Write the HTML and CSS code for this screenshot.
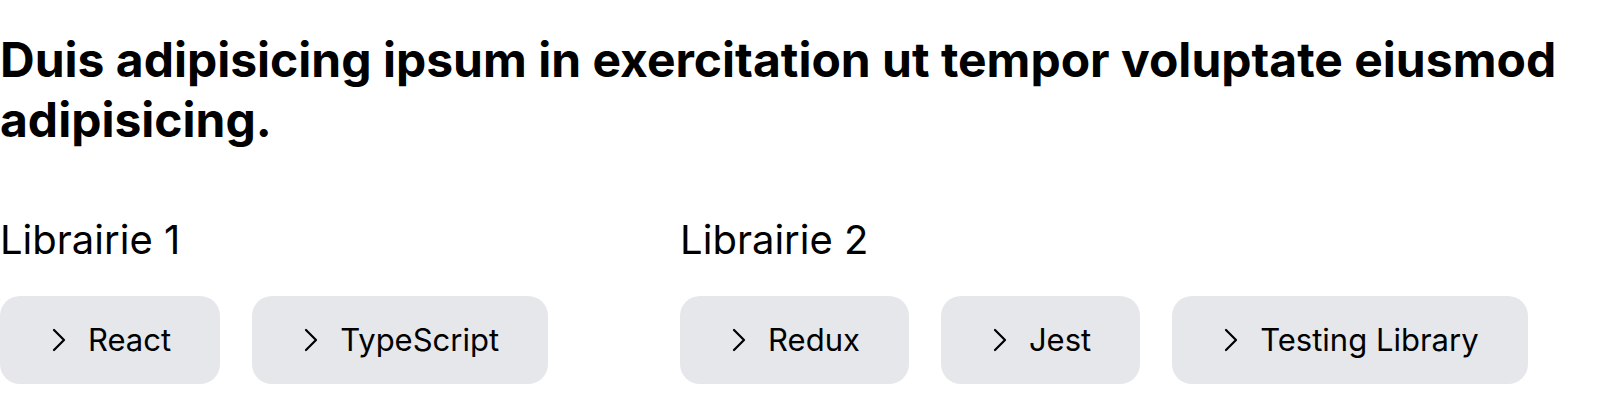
FILE: index.html
```html
<!DOCTYPE html>
<html lang="fr">
<head>
<meta charset="utf-8">
<link rel="stylesheet" href="styles.css">
</head>
<body>
<main class="page">
  <h1 class="title">Duis adipisicing ipsum in exercitation ut tempor voluptate eiusmod adipisicing.</h1>
  <div class="libs">
    <section class="lib">
      <h2 class="lib-name">Librairie 1</h2>
      <div class="tags">
        <span class="tag"><svg class="chev" viewBox="0 0 24 24"><path d="M6 2 L16 12 L6 22"/></svg>React</span>
        <span class="tag"><svg class="chev" viewBox="0 0 24 24"><path d="M6 2 L16 12 L6 22"/></svg>TypeScript</span>
      </div>
    </section>
    <section class="lib">
      <h2 class="lib-name">Librairie 2</h2>
      <div class="tags">
        <span class="tag"><svg class="chev" viewBox="0 0 24 24"><path d="M6 2 L16 12 L6 22"/></svg>Redux</span>
        <span class="tag"><svg class="chev" viewBox="0 0 24 24"><path d="M6 2 L16 12 L6 22"/></svg>Jest</span>
        <span class="tag"><svg class="chev" viewBox="0 0 24 24"><path d="M6 2 L16 12 L6 22"/></svg>Testing Library</span>
      </div>
    </section>
  </div>
</main>
</body>
</html>
```
FILE: styles.css
```css
* { box-sizing: border-box; }
html, body { margin: 0; padding: 0; background: #fff; }
body { font-family: Inter, "Noto Sans", sans-serif; color: #000; }
.page { padding-top: 30px; }
.title {
  margin: 0;
  font-size: 48px;
  line-height: 60px;
  font-weight: 700;
}
.libs {
  display: flex;
  gap: 132px;
  margin-top: 66px;
}
.lib-name {
  margin: 0;
  font-size: 40px;
  line-height: 48px;
  font-weight: 400;
}
.tags {
  display: flex;
  gap: 32px;
  margin-top: 32px;
}
.tag {
  display: flex;
  align-items: center;
  gap: 16px;
  height: 88px;
  padding: 0 49px 0 48px;
  background: #e5e7eb;
  border-radius: 20px;
  font-size: 31px;
  line-height: 40px;
}
.chev {
  width: 24px;
  height: 24px;
  flex: none;
  fill: none;
  stroke: #000;
  stroke-width: 2.25;
  stroke-linecap: round;
  stroke-linejoin: round;
}
```
